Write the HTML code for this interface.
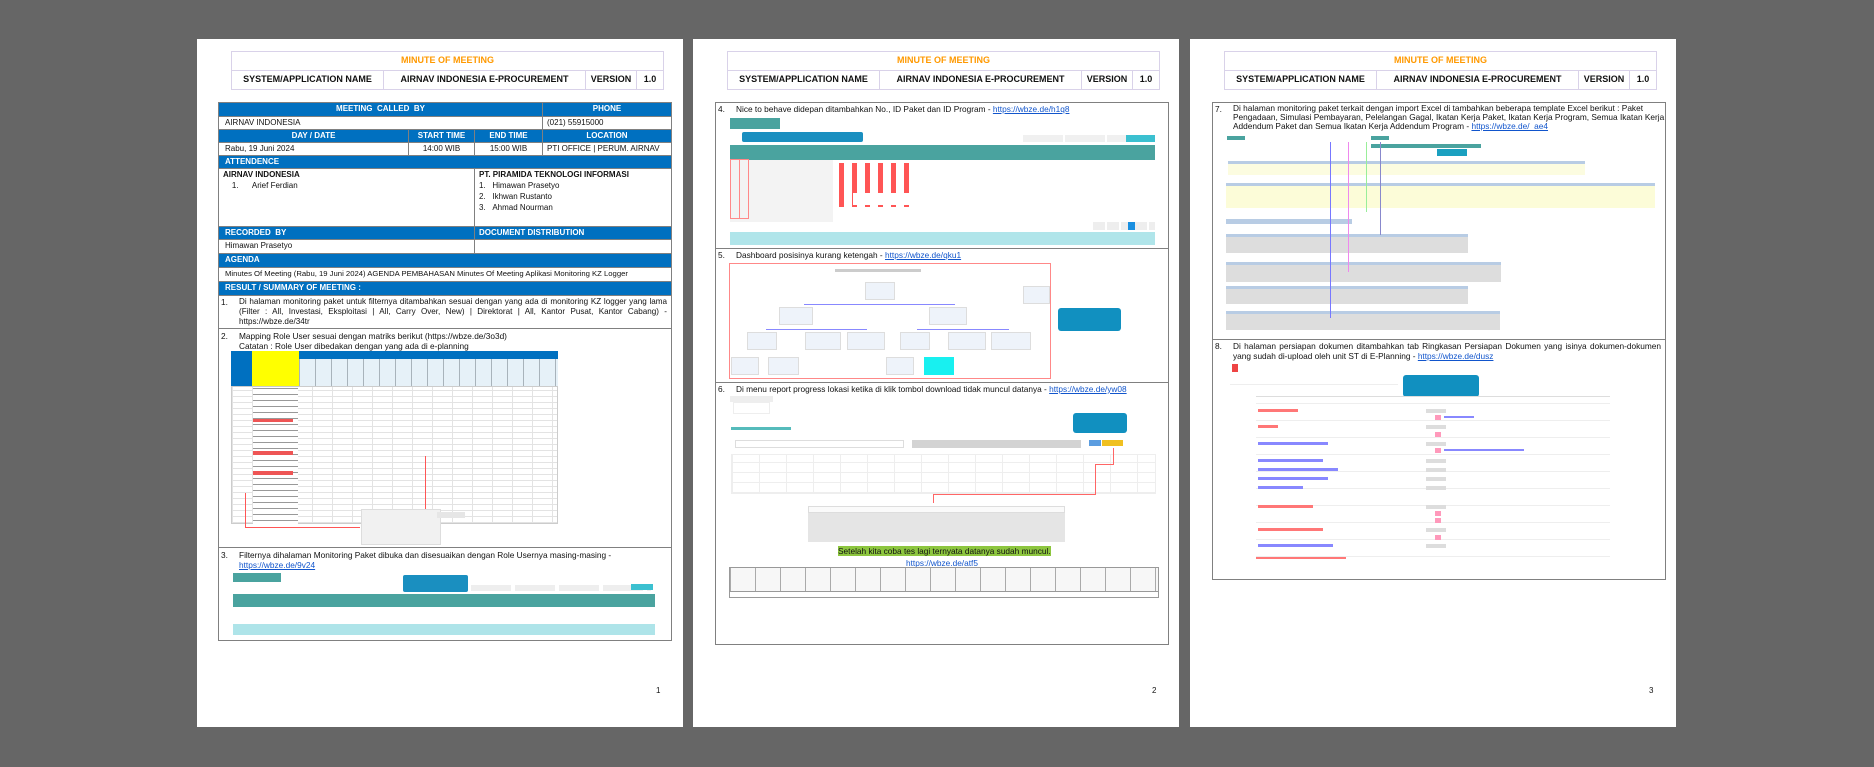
<!DOCTYPE html>
<html><head><meta charset="utf-8"><style>
body{margin:0;background:#666;width:1874px;height:767px;overflow:hidden;position:relative;font-family:"Liberation Sans",sans-serif}
.pg{position:absolute;top:39px;width:486px;height:688px;background:#fff}
.a{position:absolute;box-sizing:border-box}
.c{position:absolute;box-sizing:border-box;border:1px solid #808080;font-size:8px;line-height:12px;padding:0 0 0 6px;white-space:nowrap;overflow:hidden;color:#111}
.h{background:#0070c0;color:#fff;font-weight:bold}
.ctr{text-align:center;padding:0}
.hd{position:absolute;box-sizing:border-box;border:1px solid #d9d2e9;font-size:9px;font-weight:bold;text-align:center;line-height:17px;color:#111}
.t{position:absolute;font-size:8.3px;line-height:10px;color:#111;white-space:nowrap}
.lk{color:#1155cc;text-decoration:underline}
.teal{background:#4aa39f}
.g{background:repeating-linear-gradient(0deg,#e3e3e3 0 1px,transparent 1px 6px),repeating-linear-gradient(90deg,#e3e3e3 0 1px,transparent 1px 20px)}
.pn{position:absolute;font-size:8px;color:#111}
</style></head><body>

<!-- PAGE 1 -->
<div class="pg" style="left:197px">
 <div class="hd" style="left:34px;top:12px;width:433px;height:20px;color:#f90">MINUTE OF MEETING</div>
 <div class="hd" style="left:34px;top:31px;width:153px;height:20px">SYSTEM/APPLICATION NAME</div>
 <div class="hd" style="left:186px;top:31px;width:203px;height:20px">AIRNAV INDONESIA E-PROCUREMENT</div>
 <div class="hd" style="left:388px;top:31px;width:52px;height:20px">VERSION</div>
 <div class="hd" style="left:439px;top:31px;width:28px;height:20px">1.0</div>

 <div class="c h ctr" style="left:21px;top:63px;width:325px;height:15px">MEETING &nbsp;CALLED &nbsp;BY</div>
 <div class="c h ctr" style="left:345px;top:63px;width:130px;height:15px">PHONE</div>
 <div class="c" style="left:21px;top:77px;width:325px;height:14px">AIRNAV INDONESIA</div>
 <div class="c" style="left:345px;top:77px;width:130px;height:14px;padding-left:4px">(021) 55915000</div>
 <div class="c h ctr" style="left:21px;top:90px;width:191px;height:14px">DAY / DATE</div>
 <div class="c h ctr" style="left:211px;top:90px;width:67px;height:14px">START TIME</div>
 <div class="c h ctr" style="left:277px;top:90px;width:69px;height:14px">END TIME</div>
 <div class="c h ctr" style="left:345px;top:90px;width:130px;height:14px">LOCATION</div>
 <div class="c" style="left:21px;top:103px;width:191px;height:14px">Rabu, 19 Juni 2024</div>
 <div class="c ctr" style="left:211px;top:103px;width:67px;height:14px">14:00 WIB</div>
 <div class="c ctr" style="left:277px;top:103px;width:69px;height:14px">15:00 WIB</div>
 <div class="c" style="left:345px;top:103px;width:130px;height:14px;padding-left:4px">PTI OFFICE | PERUM. AIRNAV</div>
 <div class="c h" style="left:21px;top:116px;width:454px;height:14px">ATTENDENCE</div>
 <div class="c" style="left:21px;top:129px;width:257px;height:59px;padding-left:4px;line-height:11px"><b>AIRNAV INDONESIA</b><br>&nbsp;&nbsp;&nbsp;&nbsp;1.&nbsp;&nbsp;&nbsp;&nbsp;&nbsp;&nbsp;Arief Ferdian</div>
 <div class="c" style="left:277px;top:129px;width:198px;height:59px;padding-left:4px;line-height:11px"><b>PT. PIRAMIDA TEKNOLOGI INFORMASI</b><br>1.&nbsp;&nbsp;&nbsp;Himawan Prasetyo<br>2.&nbsp;&nbsp;&nbsp;Ikhwan Rustanto<br>3.&nbsp;&nbsp;&nbsp;Ahmad Nourman</div>
 <div class="c h" style="left:21px;top:187px;width:257px;height:14px">RECORDED &nbsp;BY</div>
 <div class="c h" style="left:277px;top:187px;width:198px;height:14px;padding-left:4px">DOCUMENT DISTRIBUTION</div>
 <div class="c" style="left:21px;top:200px;width:257px;height:15px">Himawan Prasetyo</div>
 <div class="c" style="left:277px;top:200px;width:198px;height:15px"></div>
 <div class="c h" style="left:21px;top:214px;width:454px;height:15px">AGENDA</div>
 <div class="c" style="left:21px;top:228px;width:454px;height:15px;font-size:7.7px">Minutes Of Meeting (Rabu, 19 Juni 2024) AGENDA PEMBAHASAN Minutes Of Meeting Aplikasi Monitoring KZ Logger</div>
 <div class="c h" style="left:21px;top:242px;width:454px;height:15px">RESULT / SUMMARY OF MEETING :</div>
 <div class="c" style="left:21px;top:256px;width:454px;height:34px"></div>
 <div class="t" style="left:24px;top:258px">1.</div>
 <div class="t" style="left:42px;top:258px;width:428px;white-space:normal;text-align:justify;font-size:8.1px">Di halaman monitoring paket untuk filternya ditambahkan sesuai dengan yang ada di monitoring KZ logger yang lama (Filter : All, Investasi, Eksploitasi | All, Carry Over, New) | Direktorat | All, Kantor Pusat, Kantor Cabang) - https://wbze.de/34tr</div>
 <div class="c" style="left:21px;top:289px;width:454px;height:220px"></div>
 <div class="t" style="left:24px;top:292px">2.</div>
 <div class="t" style="left:42px;top:292px">Mapping Role User sesuai dengan matriks berikut (https://wbze.de/3o3d)</div>
 <div class="t" style="left:42px;top:302px">Catatan : Role User dibedakan dengan yang ada di e-planning</div>
 <!-- matrix image -->
 <div class="a" style="left:34px;top:312px;width:327px;height:35px;background:#0070c0"></div>
 <div class="a" style="left:55px;top:312px;width:47px;height:35px;background:#ffff00"></div>
 <div class="a" style="left:102px;top:320px;width:259px;height:27px;background:#fff;opacity:.9;background-image:repeating-linear-gradient(90deg,#bbb 0 1px,transparent 1px 16px)"></div>
 <div class="a g" style="left:34px;top:347px;width:327px;height:138px;border:1px solid #ccc"></div>
 <div class="a" style="left:56px;top:348px;width:45px;height:137px;background:repeating-linear-gradient(0deg,#fff 0 3px,#999 3px 4px,#fff 4px 6px)"></div>
 <div class="a" style="left:56px;top:380px;width:40px;height:3px;background:#e55"></div>
 <div class="a" style="left:56px;top:412px;width:40px;height:4px;background:#e55"></div>
 <div class="a" style="left:56px;top:432px;width:40px;height:4px;background:#e55"></div>
 <div class="a" style="left:228px;top:417px;width:1px;height:56px;background:#f55"></div>
 <div class="a" style="left:48px;top:454px;width:1px;height:34px;background:#f55"></div>
 <div class="a" style="left:48px;top:488px;width:115px;height:1px;background:#f55"></div>
 <div class="a" style="left:164px;top:470px;width:80px;height:36px;background:#f1f1f1;border:1px solid #ddd"></div>
 <div class="a" style="left:240px;top:473px;width:28px;height:6px;background:#e6e6e6"></div>

 <div class="c" style="left:21px;top:508px;width:454px;height:94px"></div>
 <div class="t" style="left:24px;top:511px">3.</div>
 <div class="t" style="left:42px;top:511px">Filternya dihalaman Monitoring Paket dibuka dan disesuaikan dengan Role Usernya masing-masing -</div>
 <div class="t lk" style="left:42px;top:521px">https://wbze.de/9v24</div>
 <div class="a teal" style="left:36px;top:534px;width:48px;height:9px"></div>
 <div class="a" style="left:206px;top:536px;width:65px;height:17px;background:#1a8fc0;border-radius:2px"></div>
 <div class="a" style="left:274px;top:546px;width:180px;height:6px;background:repeating-linear-gradient(90deg,#eee 0 40px,#fff 40px 44px)"></div>
 <div class="a" style="left:434px;top:545px;width:22px;height:6px;background:#3bc0d0"></div>
 <div class="a teal" style="left:36px;top:555px;width:422px;height:13px"></div>
 <div class="a" style="left:36px;top:585px;width:422px;height:11px;background:#aee4e9"></div>
 <div class="pn" style="left:459px;top:647px">1</div>
</div>

<!-- PAGE 2 -->
<div class="pg" style="left:693px">
 <div class="hd" style="left:34px;top:12px;width:433px;height:20px;color:#f90">MINUTE OF MEETING</div>
 <div class="hd" style="left:34px;top:31px;width:153px;height:20px">SYSTEM/APPLICATION NAME</div>
 <div class="hd" style="left:186px;top:31px;width:203px;height:20px">AIRNAV INDONESIA E-PROCUREMENT</div>
 <div class="hd" style="left:388px;top:31px;width:52px;height:20px">VERSION</div>
 <div class="hd" style="left:439px;top:31px;width:28px;height:20px">1.0</div>

 <div class="c" style="left:22px;top:63px;width:454px;height:147px"></div>
 <div class="t" style="left:25px;top:65px">4.</div>
 <div class="t" style="left:43px;top:65px">Nice to behave didepan ditambahkan No., ID Paket dan ID Program - <span class="lk">https://wbze.de/h1q8</span></div>
 <div class="a teal" style="left:37px;top:79px;width:50px;height:11px"></div>
 <div class="a" style="left:49px;top:93px;width:121px;height:10px;background:#1a8fc0;border-radius:2px"></div>
 <div class="a" style="left:330px;top:96px;width:132px;height:7px;background:repeating-linear-gradient(90deg,#f0f0f0 0 40px,#fff 40px 42px)"></div>
 <div class="a" style="left:433px;top:96px;width:29px;height:7px;background:#3bc0d0"></div>
 <div class="a teal" style="left:37px;top:106px;width:425px;height:15px"></div>
 <div class="a" style="left:37px;top:121px;width:103px;height:62px;background:#f3f3f3"></div>
 <div class="a" style="left:142px;top:124px;width:75px;height:44px;background:repeating-linear-gradient(90deg,transparent 0 4px,#f55 4px 9px,transparent 9px 13px),repeating-linear-gradient(0deg,transparent 0 9px,#fff 9px 14px)"></div>
 <div class="a" style="left:160px;top:154px;width:60px;height:12px;background:#fff"></div>
 <div class="a" style="left:37px;top:120px;width:10px;height:60px;border:1px solid #f88"></div>
 <div class="a" style="left:46px;top:120px;width:10px;height:60px;border:1px solid #f88"></div>
 <div class="a" style="left:400px;top:183px;width:62px;height:8px;background:repeating-linear-gradient(90deg,#eee 0 12px,#fff 12px 14px)"></div>
 <div class="a" style="left:435px;top:183px;width:7px;height:8px;background:#1a8fe0"></div>
 <div class="a" style="left:37px;top:193px;width:425px;height:13px;background:#b0e5ea"></div>

 <div class="c" style="left:22px;top:209px;width:454px;height:135px"></div>
 <div class="t" style="left:25px;top:211px">5.</div>
 <div class="t" style="left:43px;top:211px">Dashboard posisinya kurang ketengah - <span class="lk">https://wbze.de/qku1</span></div>
 <div class="a" style="left:36px;top:224px;width:322px;height:116px;border:1px solid #f88"></div>
 <div class="a" style="left:142px;top:230px;width:86px;height:3px;background:#ccc"></div>
 <div class="a" style="left:172px;top:243px;width:30px;height:18px;background:#eef3fa;border:1px solid #ddd"></div>
 <div class="a" style="left:111px;top:265px;width:151px;height:1px;background:#88f"></div>
 <div class="a" style="left:86px;top:268px;width:34px;height:18px;background:#eef3fa;border:1px solid #ddd"></div>
 <div class="a" style="left:236px;top:268px;width:38px;height:18px;background:#eef3fa;border:1px solid #ddd"></div>
 <div class="a" style="left:73px;top:290px;width:101px;height:1px;background:#88f"></div>
 <div class="a" style="left:224px;top:290px;width:92px;height:1px;background:#88f"></div>
 <div class="a" style="left:54px;top:293px;width:30px;height:18px;background:#eef3fa;border:1px solid #ddd"></div>
 <div class="a" style="left:112px;top:293px;width:36px;height:18px;background:#eef3fa;border:1px solid #ddd"></div>
 <div class="a" style="left:154px;top:293px;width:38px;height:18px;background:#eef3fa;border:1px solid #ddd"></div>
 <div class="a" style="left:207px;top:293px;width:30px;height:18px;background:#eef3fa;border:1px solid #ddd"></div>
 <div class="a" style="left:255px;top:293px;width:38px;height:18px;background:#eef3fa;border:1px solid #ddd"></div>
 <div class="a" style="left:298px;top:293px;width:40px;height:18px;background:#eef3fa;border:1px solid #ddd"></div>
 <div class="a" style="left:38px;top:318px;width:28px;height:18px;background:#eef3fa;border:1px solid #ddd"></div>
 <div class="a" style="left:75px;top:318px;width:31px;height:18px;background:#eef3fa;border:1px solid #ddd"></div>
 <div class="a" style="left:193px;top:318px;width:28px;height:18px;background:#eef3fa;border:1px solid #ddd"></div>
 <div class="a" style="left:231px;top:318px;width:30px;height:18px;background:#18f0f0"></div>
 <div class="a" style="left:330px;top:247px;width:27px;height:18px;background:#eef3fa;border:1px solid #ddd"></div>
 <div class="a" style="left:365px;top:269px;width:63px;height:23px;background:#1190c0;border-radius:3px"></div>

 <div class="c" style="left:22px;top:343px;width:454px;height:263px"></div>
 <div class="t" style="left:25px;top:345px">6.</div>
 <div class="t" style="left:43px;top:345px">Di menu report progress lokasi ketika di klik tombol download tidak muncul datanya - <span class="lk">https://wbze.de/yw08</span></div>
 <div class="a" style="left:37px;top:357px;width:43px;height:6px;background:#eee"></div>
 <div class="a" style="left:40px;top:363px;width:37px;height:12px;background:#fff;border:1px solid #eee"></div>
 <div class="a" style="left:38px;top:388px;width:60px;height:3px;background:#5bb"></div>
 <div class="a" style="left:380px;top:374px;width:54px;height:20px;background:#1190c0;border-radius:3px"></div>
 <div class="a" style="left:42px;top:401px;width:169px;height:8px;border:1px solid #ddd"></div>
 <div class="a" style="left:219px;top:401px;width:169px;height:8px;background:#d3d3d3"></div>
 <div class="a" style="left:396px;top:401px;width:12px;height:6px;background:#5b9de0"></div>
 <div class="a" style="left:409px;top:401px;width:21px;height:6px;background:#f0c020"></div>
 <div class="a" style="left:38px;top:415px;width:425px;height:40px;border:1px solid #eee;background:repeating-linear-gradient(0deg,#eee 0 1px,transparent 1px 10px),repeating-linear-gradient(90deg,#eee 0 1px,transparent 1px 27px)"></div>
 <div class="a" style="left:420px;top:409px;width:1px;height:16px;background:#f66"></div>
 <div class="a" style="left:402px;top:425px;width:19px;height:1px;background:#f66"></div>
 <div class="a" style="left:402px;top:425px;width:1px;height:30px;background:#f66"></div>
 <div class="a" style="left:240px;top:455px;width:163px;height:1px;background:#f66"></div>
 <div class="a" style="left:240px;top:455px;width:1px;height:9px;background:#f66"></div>
 <div class="a" style="left:115px;top:467px;width:257px;height:36px;background:#e5e5e5"></div>
 <div class="a" style="left:115px;top:467px;width:257px;height:7px;background:#fafafa;border:1px solid #ddd"></div>
 <div class="t" style="left:145px;top:507px;background:#8dc63f">Setelah kita coba tes lagi ternyata datanya sudah muncul.</div>
 <div class="t lk" style="left:213px;top:519px">https://wbze.de/atf5</div>
 <div class="a" style="left:36px;top:528px;width:430px;height:31px;border:1px solid #999;background:#f7f7f7 repeating-linear-gradient(90deg,#aaa 0 1px,transparent 1px 25px)"></div>
 <div class="a" style="left:36px;top:552px;width:430px;height:7px;background:#fff;border:1px solid #999"></div>
 <div class="pn" style="left:459px;top:647px">2</div>
</div>

<!-- PAGE 3 -->
<div class="pg" style="left:1190px">
 <div class="hd" style="left:34px;top:12px;width:433px;height:20px;color:#f90">MINUTE OF MEETING</div>
 <div class="hd" style="left:34px;top:31px;width:153px;height:20px">SYSTEM/APPLICATION NAME</div>
 <div class="hd" style="left:186px;top:31px;width:203px;height:20px">AIRNAV INDONESIA E-PROCUREMENT</div>
 <div class="hd" style="left:388px;top:31px;width:52px;height:20px">VERSION</div>
 <div class="hd" style="left:439px;top:31px;width:28px;height:20px">1.0</div>

 <div class="c" style="left:22px;top:63px;width:454px;height:238px"></div>
 <div class="t" style="left:25px;top:65px">7.</div>
 <div class="t" style="left:43px;top:65px;line-height:9px">Di halaman monitoring paket terkait dengan import Excel di tambahkan beberapa template Excel berikut : Paket<br>Pengadaan, Simulasi Pembayaran, Pelelangan Gagal, Ikatan Kerja Paket, Ikatan Kerja Program, Semua Ikatan Kerja<br>Addendum Paket dan Semua Ikatan Kerja Addendum Program - <span class="lk">https://wbze.de/_ae4</span></div>
 <div class="a teal" style="left:37px;top:97px;width:18px;height:4px"></div>
 <div class="a teal" style="left:181px;top:97px;width:18px;height:4px"></div>
 <div class="a teal" style="left:181px;top:105px;width:110px;height:4px"></div>
 <div class="a" style="left:247px;top:110px;width:30px;height:7px;background:#1aa0c0"></div>
 <div class="a" style="left:38px;top:122px;width:357px;height:14px;background:#fcfce0;border-top:3px solid #b8cce4"></div>
 <div class="a" style="left:36px;top:144px;width:429px;height:25px;background:#fcfcd8;border-top:3px solid #b8cce4"></div>
 <div class="a" style="left:36px;top:180px;width:126px;height:5px;background:#b8cce4"></div>
 <div class="a" style="left:36px;top:195px;width:242px;height:19px;background:#ddd;border-top:3px solid #b8cce4"></div>
 <div class="a" style="left:36px;top:223px;width:275px;height:20px;background:#ddd;border-top:3px solid #b8cce4"></div>
 <div class="a" style="left:36px;top:247px;width:242px;height:18px;background:#ddd;border-top:3px solid #b8cce4"></div>
 <div class="a" style="left:36px;top:272px;width:274px;height:19px;background:#ddd;border-top:3px solid #b8cce4"></div>
 <div class="a" style="left:140px;top:103px;width:1px;height:176px;background:#77f"></div>
 <div class="a" style="left:158px;top:103px;width:1px;height:130px;background:#e8e"></div>
 <div class="a" style="left:176px;top:103px;width:1px;height:70px;background:#9e9"></div>
 <div class="a" style="left:190px;top:103px;width:1px;height:93px;background:#88c"></div>
 <div class="pn" style="left:459px;top:647px">3</div>

 <div class="c" style="left:22px;top:300px;width:454px;height:241px"></div>
 <div class="t" style="left:25px;top:302px">8.</div>
 <div class="t" style="left:43px;top:302px;width:428px;white-space:normal;text-align:justify">Di halaman persiapan dokumen ditambahkan tab Ringkasan Persiapan Dokumen yang isinya dokumen-dokumen yang sudah di-upload oleh unit ST di E-Planning - <span class="lk">https://wbze.de/dusz</span></div>
 <div class="a" style="left:42px;top:325px;width:6px;height:8px;background:#e44"></div>
 <div class="a" style="left:40px;top:339px;width:168px;height:7px;border-bottom:1px solid #eee"></div>
 <div class="a" style="left:213px;top:336px;width:76px;height:22px;background:#1190c0;border-radius:3px"></div>
 <div class="a" style="left:66px;top:357px;width:354px;height:1px;background:#ddd"></div>
 <div class="a" style="left:66px;top:363px;width:354px;height:155px;background:repeating-linear-gradient(0deg,#eee 0 1px,transparent 1px 17px)"></div>
 <div class="a" style="left:68px;top:370px;width:40px;height:3px;background:#f77"></div>
 <div class="a" style="left:68px;top:386px;width:20px;height:3px;background:#f77"></div>
 <div class="a" style="left:68px;top:403px;width:70px;height:3px;background:#88f"></div>
 <div class="a" style="left:68px;top:420px;width:65px;height:3px;background:#88f"></div>
 <div class="a" style="left:68px;top:429px;width:80px;height:3px;background:#88f"></div>
 <div class="a" style="left:68px;top:438px;width:70px;height:3px;background:#88f"></div>
 <div class="a" style="left:68px;top:447px;width:45px;height:3px;background:#88f"></div>
 <div class="a" style="left:68px;top:466px;width:55px;height:3px;background:#f77"></div>
 <div class="a" style="left:68px;top:489px;width:65px;height:3px;background:#f77"></div>
 <div class="a" style="left:68px;top:505px;width:75px;height:3px;background:#88f"></div>
 <div class="a" style="left:66px;top:518px;width:90px;height:2px;background:#f77"></div>
 <div class="a" style="left:236px;top:370px;width:20px;height:4px;background:#ddd"></div>
 <div class="a" style="left:236px;top:386px;width:20px;height:4px;background:#ddd"></div>
 <div class="a" style="left:236px;top:403px;width:20px;height:4px;background:#ddd"></div>
 <div class="a" style="left:236px;top:420px;width:20px;height:4px;background:#ddd"></div>
 <div class="a" style="left:236px;top:429px;width:20px;height:4px;background:#ddd"></div>
 <div class="a" style="left:236px;top:438px;width:20px;height:4px;background:#ddd"></div>
 <div class="a" style="left:236px;top:447px;width:20px;height:4px;background:#ddd"></div>
 <div class="a" style="left:236px;top:466px;width:20px;height:4px;background:#ddd"></div>
 <div class="a" style="left:236px;top:489px;width:20px;height:4px;background:#ddd"></div>
 <div class="a" style="left:236px;top:505px;width:20px;height:4px;background:#ddd"></div>
 <div class="a" style="left:245px;top:376px;width:6px;height:5px;background:#f9b"></div>
 <div class="a" style="left:254px;top:377px;width:30px;height:2px;background:#88f"></div>
 <div class="a" style="left:245px;top:393px;width:6px;height:5px;background:#f9b"></div>
 <div class="a" style="left:245px;top:409px;width:6px;height:5px;background:#f9b"></div>
 <div class="a" style="left:254px;top:410px;width:80px;height:2px;background:#88f"></div>
 <div class="a" style="left:245px;top:472px;width:6px;height:5px;background:#f9b"></div>
 <div class="a" style="left:245px;top:479px;width:6px;height:5px;background:#f9b"></div>
 <div class="a" style="left:245px;top:496px;width:6px;height:5px;background:#f9b"></div>
</div>
</body></html>
